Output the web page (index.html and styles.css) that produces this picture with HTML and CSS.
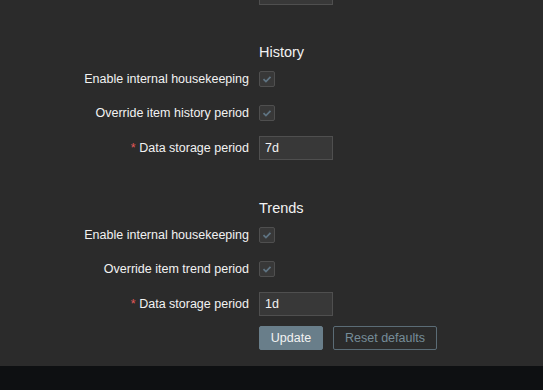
FILE: index.html
```html
<!DOCTYPE html>
<html lang="en">
<head>
  <meta charset="UTF-8" />
  <meta name="viewport" content="width=device-width, initial-scale=1.0" />
  <title>Housekeeping</title>
  <link rel="stylesheet" href="styles.css">
</head>
<body>
  <main class="page">
    <form class="form-list">
      <div class="row row-cut">
        <span></span>
        <div class="cut-box"><span class="input"></span></div>
      </div>

      <h4 class="section-title">History</h4>
      <div class="row">
        <label>Enable internal housekeeping</label>
        <span class="checkbox"><svg viewBox="0 0 16 16"><path d="M4 8.2 L6.8 11 L12 5.6" /></svg></span>
      </div>
      <div class="row">
        <label>Override item history period</label>
        <span class="checkbox"><svg viewBox="0 0 16 16"><path d="M4 8.2 L6.8 11 L12 5.6" /></svg></span>
      </div>
      <div class="row row-input">
        <label><span class="required">*</span> Data storage period</label>
        <input class="input" type="text" value="7d" />
      </div>

      <h4 class="section-title">Trends</h4>
      <div class="row">
        <label>Enable internal housekeeping</label>
        <span class="checkbox"><svg viewBox="0 0 16 16"><path d="M4 8.2 L6.8 11 L12 5.6" /></svg></span>
      </div>
      <div class="row">
        <label>Override item trend period</label>
        <span class="checkbox"><svg viewBox="0 0 16 16"><path d="M4 8.2 L6.8 11 L12 5.6" /></svg></span>
      </div>
      <div class="row row-input">
        <label><span class="required">*</span> Data storage period</label>
        <input class="input" type="text" value="1d" />
      </div>

      <div class="row row-buttons">
        <span></span>
        <div class="buttons">
          <button type="button" class="btn">Update</button>
          <button type="button" class="btn btn-alt">Reset defaults</button>
        </div>
      </div>
    </form>
  </main>
  <footer class="footer"></footer>
</body>
</html>
```

FILE: styles.css
```css
* {
  box-sizing: border-box;
}

html, body {
  margin: 0;
  padding: 0;
  height: 100%;
  font-family: 'Liberation Sans', Arial, sans-serif;
  font-size: 12.5px;
  color: #f2f2f2;
  background-color: #0e1012;
}

body {
  display: flex;
  flex-direction: column;
  overflow: hidden;
}

.page {
  background-color: #2b2b2b;
  padding-bottom: 16px;
}

.form-list {
  display: flex;
  flex-direction: column;
  margin: 0;
}

.row {
  display: grid;
  grid-template-columns: 249px auto;
  column-gap: 10px;
  align-items: center;
  min-height: 24px;
  margin-top: 10px;
}

.row label {
  text-align: right;
  white-space: nowrap;
}

.row-cut {
  min-height: 0;
  height: 5px;
  margin-top: 0;
  align-items: end;
}

.cut-box {
  height: 5px;
  overflow: hidden;
  display: flex;
  align-items: flex-end;
}

.cut-box .input {
  display: block;
  flex-shrink: 0;
}

.row-input {
  margin-top: 11px;
  margin-bottom: 1px;
}

.row-buttons {
  margin-top: 9px;
}

.section-title {
  margin: 37px 0 -5px 259px;
  height: 20px;
  line-height: 20px;
  font-size: 14.5px;
  font-weight: normal;
  color: #f2f2f2;
}

.required {
  color: #e45959;
}

.checkbox {
  width: 16px;
  height: 16px;
  border: 1px solid #4f4f4f;
  border-radius: 2px;
  background-color: #383838;
  display: flex;
  align-items: center;
  justify-content: center;
}

.checkbox svg {
  width: 14px;
  height: 14px;
  fill: none;
  stroke: #5f7483;
  stroke-width: 2;
}

.input {
  width: 74px;
  height: 24px;
  padding: 0 5px;
  border: 1px solid #4f4f4f;
  background-color: #383838;
  color: #f2f2f2;
  font-family: inherit;
  font-size: 12.5px;
  outline: none;
  margin: 0;
}

.buttons {
  display: flex;
  gap: 10px;
}

.btn {
  height: 24px;
  padding: 0 6px;
  width: 64px;
  font-family: inherit;
  font-size: 12.5px;
  color: #f2f2f2;
  background-color: #697e8a;
  border: 1px solid #697e8a;
  border-radius: 2px;
  cursor: pointer;
}

.btn-alt {
  width: 104px;
  background-color: transparent;
  color: #768d99;
  border-color: #5b6c76;
}

.footer {
  flex: 1;
  background-color: #0e1012;
}
```
